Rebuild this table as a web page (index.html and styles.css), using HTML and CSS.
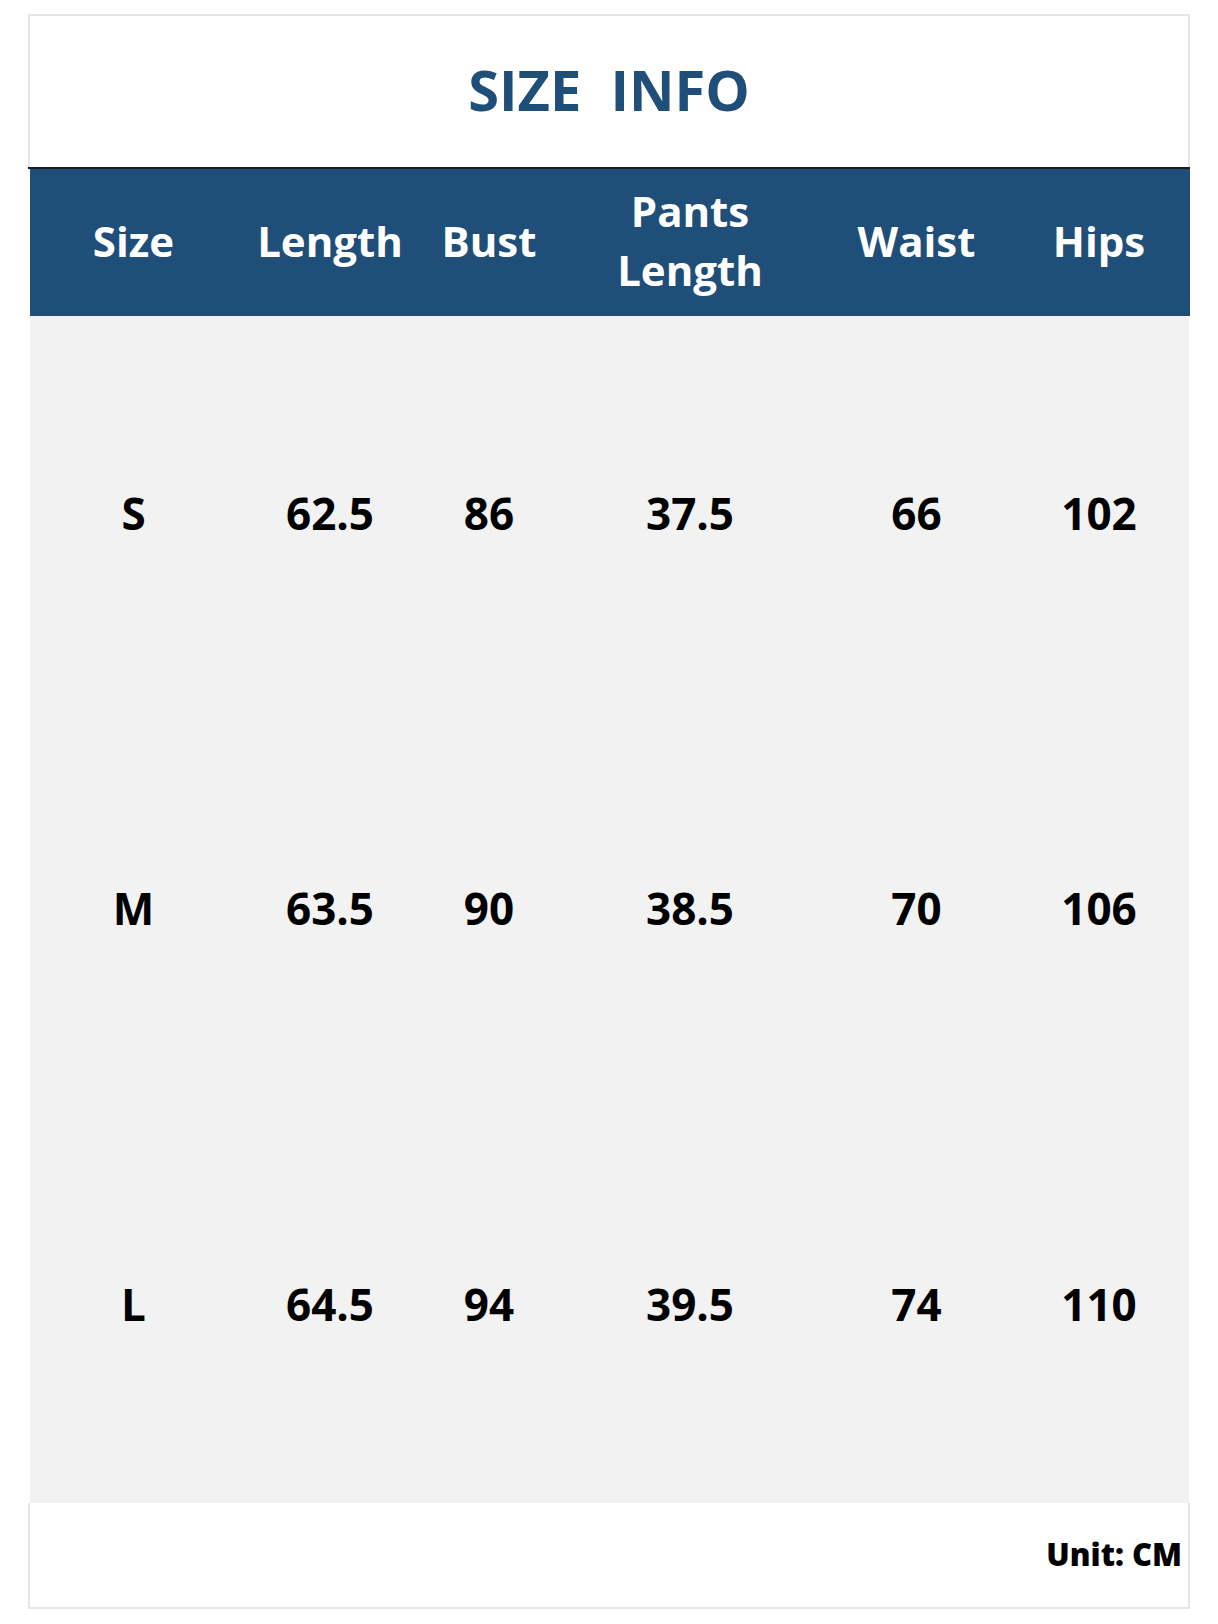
FILE: index.html
```html
<!DOCTYPE html>
<html lang="en">
<head>
<meta charset="utf-8">
<title>Size Info</title>
<link rel="stylesheet" href="styles.css">
</head>
<body>
<div class="sheet">
  <div class="title-box">
    <h1 class="title">SIZE&nbsp;&nbsp;INFO</h1>
  </div>
  <div class="rule"></div>
  <div class="grid head">
    <div class="cell">Size</div>
    <div class="cell">Length</div>
    <div class="cell">Bust</div>
    <div class="cell">Pants<br>Length</div>
    <div class="cell">Waist</div>
    <div class="cell">Hips</div>
  </div>
  <div class="body">
    <div class="grid row">
      <div class="cell">S</div>
      <div class="cell">62.5</div>
      <div class="cell">86</div>
      <div class="cell">37.5</div>
      <div class="cell">66</div>
      <div class="cell">102</div>
    </div>
    <div class="grid row">
      <div class="cell">M</div>
      <div class="cell">63.5</div>
      <div class="cell">90</div>
      <div class="cell">38.5</div>
      <div class="cell">70</div>
      <div class="cell">106</div>
    </div>
    <div class="grid row">
      <div class="cell">L</div>
      <div class="cell">64.5</div>
      <div class="cell">94</div>
      <div class="cell">39.5</div>
      <div class="cell">74</div>
      <div class="cell">110</div>
    </div>
  </div>
  <div class="footer">
    <span class="unit">Unit: CM</span>
  </div>
</div>
</body>
</html>
```

FILE: styles.css
```css
html, body {
  margin: 0;
  padding: 0;
  background: #ffffff;
}

body {
  font-family: "Open Sans", "Noto Sans", "DejaVu Sans", sans-serif;
  font-weight: 700;
}

.sheet {
  width: 1162px;
  margin: 14px 0 0 28px;
}

.title-box {
  height: 151px;
  border: 2px solid #e6e6e6;
  border-bottom: 0;
  display: flex;
  align-items: center;
  justify-content: center;
}

.title {
  margin: 0;
  font-size: 56px;
  font-weight: 700;
  color: #1f4e79;
  line-height: 1;
  padding: 0 0 6px 0;
}

.rule {
  height: 2px;
  background: #1c1c1c;
}

.grid {
  display: grid;
  grid-template-columns: 207px 186px 132px 270px 183px 182px;
  margin-left: 2px;
  width: 1160px;
}

.cell {
  display: flex;
  align-items: center;
  justify-content: center;
  text-align: center;
  font-size: 44px;
  line-height: 58px;
}

.head {
  height: 147px;
  background: #1f4e79;
  color: #ffffff;
}

.head .cell {
  font-size: 42px;
  line-height: 59px;
  padding-bottom: 5px;
}

.body {
  margin-left: 2px;
  width: 1159px;
  background: #f2f2f2;
  display: flex;
  flex-direction: column;
}

.body .grid {
  margin-left: 0;
}

.row {
  height: 395.67px;
  color: #000000;
}

.row .cell {
  padding-bottom: 2px;
}

.footer {
  height: 104px;
  border: 2px solid #e6e6e6;
  border-top: 0;
  display: flex;
  align-items: center;
  justify-content: flex-end;
  padding-right: 6px;
}

.unit {
  font-size: 31px;
  font-weight: 800;
  color: #000000;
  line-height: 1;
}
```
